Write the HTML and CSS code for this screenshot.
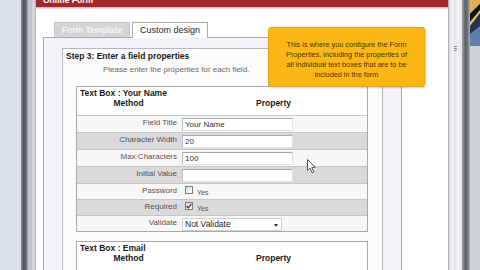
FILE: index.html
```html
<!DOCTYPE html>
<html>
<head>
<meta charset="utf-8">
<link rel="stylesheet" href="styles.css">
</head>
<body>
<div class="screen">
  <div class="lbg"></div>
  <div class="lshadow"></div>
  <div class="lframe"></div>
  <div class="panel">
    <div class="titlebar"><span>Online Form</span></div>
    <div class="titleline"></div>
    <div class="pbody">
      <div class="tabarea">
        <div class="tabs">
          <div class="tab off">Form Template</div>
          <div class="tab on">Custom design</div>
        </div>
        <div class="tabcontent">
          <div class="step">
            <div class="steptitle">Step 3: Enter a field properties</div>
            <div class="stephint">Please enter the properties for each field.</div>
            <div class="fbox">
              <div class="ftitle">Text Box : Your Name</div>
              <div class="fhead"><span>Method</span><span>Property</span></div>
              <div class="frow light"><div class="lab">Field Title</div><div class="val"><div class="inp">Your Name</div></div></div>
              <div class="frow gray"><div class="lab">Character Width</div><div class="val"><div class="inp">20</div></div></div>
              <div class="frow light"><div class="lab">Max Characters</div><div class="val"><div class="inp">100</div></div></div>
              <div class="frow gray"><div class="lab">Initial Value</div><div class="val"><div class="inp"></div></div></div>
              <div class="frow light short"><div class="lab">Password</div><div class="val chk"><span class="cb"></span><span class="yes">Yes</span></div></div>
              <div class="frow gray short"><div class="lab">Required</div><div class="val chk"><span class="cb"><svg width="6" height="6" viewBox="0 0 6 6"><path d="M0.6 3 L2.3 4.8 L5.4 0.8" fill="none" stroke="#333" stroke-width="1.1"/></svg></span><span class="yes">Yes</span></div></div>
              <div class="frow light short"><div class="lab">Validate</div><div class="val"><div class="sel"><span>Not Validate</span><span class="arrow"></span></div></div></div>
            </div>
            <div class="fbox second">
              <div class="ftitle">Text Box : Email</div>
              <div class="fhead"><span>Method</span><span>Property</span></div>
            </div>
          </div>
        </div>
      </div>
    </div>
  </div>
  <div class="rscroll"><div class="grip"></div></div>
  <div class="rshadow"></div>
  <div class="rimg">
    <svg width="10" height="46" viewBox="0 0 10 46">
      <rect width="10" height="46" fill="#26344f"/>
      <polygon points="0,0 10,0 10,4 0,14" fill="#d9b257"/>
      <polygon points="0,14 10,4 10,10 0,22" fill="#111"/>
      <polygon points="0,22 10,10 10,13 0,26" fill="#e6c36a"/>
      <polygon points="0,34 10,26 10,46 0,46" fill="#5f7fa6"/>
    </svg>
  </div>
  <div class="tip">This is where you configure the Form<br>Properties, including the properties of<br>all individual text boxes that are to be<br>included in the form</div>
  <svg class="cursor" width="10" height="15" viewBox="0 0 10 15">
    <path d="M0.5 0.5 L0.5 11.5 L3 9 L5 13.8 L6.8 13 L4.8 8.4 L8.3 8.4 Z" fill="#fff" stroke="#555" stroke-width="1"/>
  </svg>
</div>
</body>
</html>
```
FILE: styles.css
```css
* { box-sizing: border-box; }
html, body { margin: 0; padding: 0; }
body {
  width: 480px;
  height: 270px;
  overflow: hidden;
  background: #fff;
  font-family: "Liberation Sans", Arial, sans-serif;
}
.screen {
  position: relative;
  display: flex;
  width: 480px;
  height: 270px;
  overflow: hidden;
}
.lbg { width: 21px; flex: none; background: #d8dfe9; }
.lshadow {
  width: 7px; flex: none;
  background: linear-gradient(to right, #8c9098, #50545b 35%, #62666d 70%, #a7a9ae);
}
.lframe {
  width: 8px; flex: none;
  background: linear-gradient(to right, #c2c3c8 0, #c2c3c8 4px, #e4e4e8 5px, #cfd0d4 6px);
  border-right: 1px solid #b8b8bf;
}
.panel {
  width: 413px; flex: none;
  display: flex; flex-direction: column;
  background: #fff;
  border-right: 1px solid #b4b4b8;
  min-height: 0;
}
.titlebar { height: 7px; flex: none; background: #a1282d; overflow: hidden; }
.titlebar span {
  display: block;
  margin: -4px 0 0 7px;
  font-size: 8.5px; font-weight: bold; line-height: 8px;
  color: #fff;
}
.titleline { height: 2px; flex: none; background: linear-gradient(#d9a5a8, #f6e8e9); }
.pbody { flex: 1; display: flex; padding: 13px 0 0 7px; min-height: 0; }
.tabarea { width: 359px; flex: none; display: flex; flex-direction: column; min-height: 0; }
.tabs { display: flex; gap: 2px; padding-left: 11px; height: 15px; flex: none; }
.tab {
  height: 15px;
  border: 1px solid #b4b4b4; border-bottom: none;
  text-align: center; line-height: 14px; white-space: nowrap;
}
.tab.off {
  width: 76px;
  background: #d5d5d5; color: #f4f4f4;
  font-weight: bold; font-size: 8.5px;
  border-color: #c6c6c6;
}
.tab.on {
  width: 76px; height: 16px; margin-bottom: -1px;
  position: relative; z-index: 1;
  background: #fff; color: #1d2740;
  font-size: 9px;
  border-color: #a8a8a8;
}
.tabcontent {
  flex: 1; min-height: 0;
  display: flex; flex-direction: column;
  border: 1px solid #a8a8b0; border-bottom: none;
  background: #f4f2f9;
  padding: 10px 18px 0 18px;
}
.step {
  flex: 1; min-height: 0; overflow: hidden;
  border: 1px solid #b9b5c2; border-bottom: none;
  background: #fdfbfc;
  padding: 2px 0 0 3px;
}
.steptitle { font-size: 8.5px; font-weight: bold; line-height: 10px; color: #1a1a1a; }
.stephint { font-size: 8px; line-height: 10px; color: #6a6a6a; margin: 4px 0 0 37px; }
.fbox {
  width: 292px;
  margin: 11px 0 0 10px;
  border: 1px solid #a9a9a9;
  background: #fff;
}
.fbox.second { margin-top: 9px; height: 40px; }
.ftitle { padding: 1px 0 0 3px; font-size: 8.5px; font-weight: bold; line-height: 10px; color: #1a1a1a; }
.fhead {
  display: grid; grid-template-columns: 103px 1fr;
  font-size: 8.5px; font-weight: bold; line-height: 10px;
  text-align: center; color: #1a1a1a;
  padding-bottom: 7px;
}
.frow {
  display: grid; grid-template-columns: 103px 1fr;
  height: 17px;
  border-top: 1px solid #c6c6c6;
}
.frow.short { height: 16px; }
.frow.light { background: #f7f7f7; }
.frow.gray { background: #dadada; }
.lab {
  text-align: right;
  padding: 2px 3px 0 0;
  font-size: 8px; line-height: 9px;
  color: #555;
  white-space: nowrap;
}
.val { padding: 1px 0 0 2px; }
.frow:not(.short) .val { padding-top: 2px; }
.inp {
  width: 111px; height: 13px;
  border: 1px solid;
  border-color: #a9a9a9 #e2e2e2 #e2e2e2 #bdbdbd;
  background: #fff;
  padding-left: 2px;
  font-size: 8px; line-height: 11px;
  color: #333;
}
.val.chk { display: flex; align-items: flex-start; padding: 2px 0 0 5px; }
.cb {
  width: 8px; height: 8px;
  border: 1px solid #7d7d7d;
  background: linear-gradient(135deg, #d6d6d6, #fff);
  display: flex; align-items: center; justify-content: center;
}
.yes { font-size: 7px; line-height: 9px; color: #555; margin: 2px 0 0 4px; }
.sel {
  width: 100px; height: 13px;
  margin-top: 1px;
  display: flex; justify-content: space-between; align-items: flex-start;
  border: 1px solid #d0d0d0;
  background: #fff;
  padding-left: 2px;
  font-size: 8.5px; line-height: 11px;
  color: #222;
}
.arrow {
  width: 0; height: 0;
  margin: 5px 3px 0 0;
  border-left: 2px solid transparent;
  border-right: 2px solid transparent;
  border-top: 3px solid #333;
}
.rscroll {
  width: 13px; flex: none;
  display: flex; flex-direction: column; align-items: center;
  background: linear-gradient(to right, #d8d8dc, #f2f2f4 3px, #e4e4e7 7px, #f4f4f6 8px, #e2e2e4);
}
.grip {
  margin-top: 46px;
  width: 3px; height: 5px;
  background: repeating-linear-gradient(#888 0, #888 1px, transparent 1px, transparent 2px);
}
.rshadow {
  width: 8px; flex: none;
  background: linear-gradient(to right, #a3a5aa, #5e6167 40%, #6e7177 70%, #b2b4b8);
}
.rimg { width: 10px; flex: none; background: #d0d1d4; display: flex; flex-direction: column; }
.rimg svg { display: block; }
.tip {
  position: absolute;
  left: 268px; top: 27px;
  width: 157px; height: 60px;
  background: #fbb716;
  border: 1px solid #eaa50f;
  border-radius: 3px;
  box-shadow: 1px 1px 2px rgba(0, 0, 0, 0.2);
  padding-top: 12px;
  text-align: center;
  font-size: 7.3px; line-height: 10px;
  color: #4a3612;
  white-space: nowrap;
}
.cursor { position: absolute; left: 307px; top: 159px; }
```
